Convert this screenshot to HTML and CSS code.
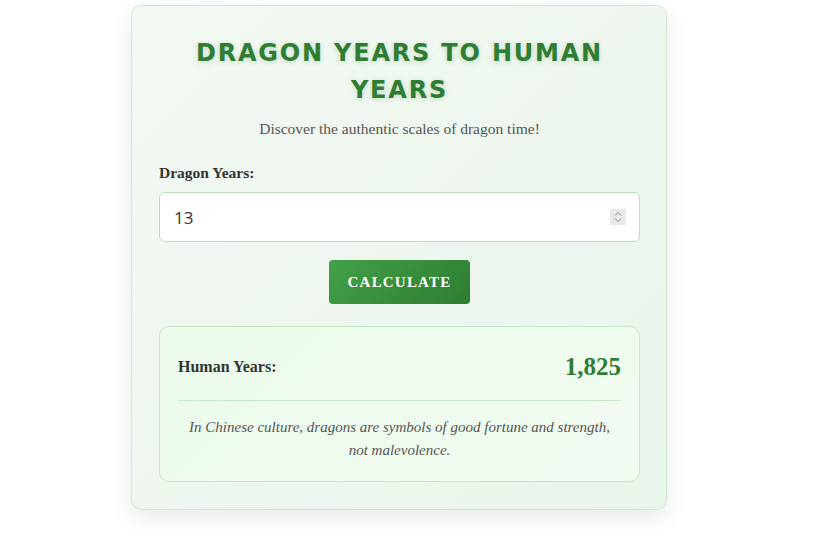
FILE: index.html
```
<html>
<head>
  <title>Dragon Years to Human Years</title>
  <link rel="stylesheet" href="styles.css">
</head>
<body>
<div class="card">
  <h1 class="title">Dragon Years to Human Years</h1>
  <p class="sub">Discover the authentic scales of dragon time!</p>

  <label class="label" for="years">Dragon Years:</label>
  <div class="field">
    <input id="years" class="input" type="number" value="13">
    <span class="spin">
      <svg width="8" height="12" viewBox="0 0 8 12"><path d="M1 4.5 L4 1.5 L7 4.5 M1 7.5 L4 10.5 L7 7.5" fill="none" stroke="#8a8a8e" stroke-width="1"/></svg>
    </span>
  </div>

  <div class="actions">
    <button class="btn">Calculate</button>
  </div>

  <div class="result">
    <div class="row">
      <span class="rlabel">Human Years:</span>
      <span class="rvalue">1,825</span>
    </div>
    <p class="note">In Chinese culture, dragons are symbols of good fortune and strength, not malevolence.</p>
  </div>
</div>
</body>
</html>
```

FILE: styles.css
```
body {margin: 0; background: #fff; font-family: "Liberation Serif", serif; color: #333;}

.card {
  width: 481px; margin: 5px 0 0 131px; padding: 29px 26px 27px 27px;
  border: 1px solid #cfe8cf; border-radius: 10px;
  background: linear-gradient(135deg, #f3f9f3, #e9f4ea);
  box-shadow: 0 8px 22px rgba(0,0,0,0.09);
}

.title {
  margin: 0; text-align: center; color: #2e7d32;
  font-family: "DejaVu Sans", sans-serif; font-weight: bold;
  font-size: 24px; line-height: 37px; letter-spacing: 1.8px; text-transform: uppercase;
  text-shadow: 0 1px 5px rgba(46,125,50,0.25);
}
.sub {margin: 11px 0 0; text-align: center; font-size: 15.5px; color: #555;}

.label {display: block; margin-top: 26px; font-weight: bold; font-size: 15.5px; color: #333;}
.field {position: relative; margin-top: 10px;}
.input {
  display: block; width: 100%; box-sizing: border-box; height: 50px;
  padding: 0 12px 0 14px; border: 1px solid #b8dfb9; border-radius: 6px;
  background: #fff; font-family: "Open Sans", sans-serif; font-size: 17px; color: #333;
}
.input::-webkit-inner-spin-button {-webkit-appearance: none; margin: 0;}
.spin {
  position: absolute; right: 14px; top: 17px; width: 16px; height: 16px;
  display: flex; align-items: center; justify-content: center; background: #e9e9ed;
}

.actions {display: flex; justify-content: center; margin-top: 18px;}
.btn {
  width: 141px; height: 44px; border: 0; border-radius: 4px;
  background: linear-gradient(135deg, #43a047, #2e7d32); color: #fff;
  font-family: "Liberation Serif", serif; font-weight: bold; font-size: 15px;
  letter-spacing: 1.2px; text-transform: uppercase;
}

.result {
  margin-top: 22px; padding: 0 18px 19px;
  border: 1px solid #c8e6c9; border-radius: 10px;
  background: linear-gradient(135deg, #ecfbec, #f2fbf2);
}
.row {display: flex; justify-content: space-between; align-items: center; height: 66px; padding-top: 7px; border-bottom: 1px solid #c8e6c9;}
.rlabel {font-weight: bold; font-size: 16px; color: #333;}
.rvalue {font-weight: bold; font-size: 25px; color: #2e7d32;}
.note {margin: 15px 0 0; text-align: center; font-style: italic; font-size: 15px; line-height: 23px; color: #555;}
```
